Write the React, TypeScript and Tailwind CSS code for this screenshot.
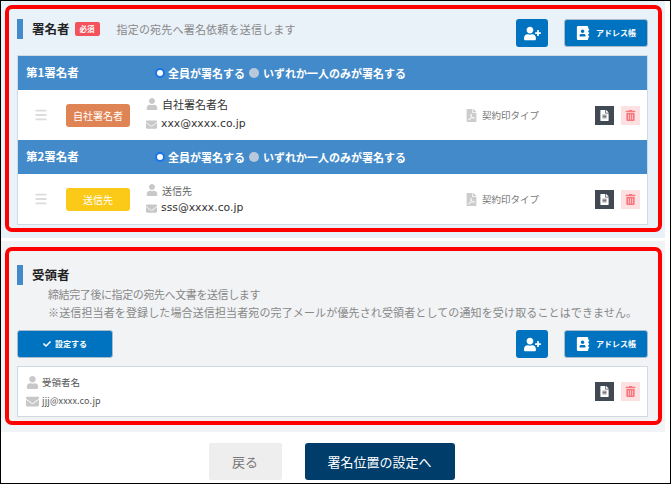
import React from 'react';
import { FaAddressBook, FaBars, FaCheck, FaEnvelope, FaFileAlt, FaFilePdf, FaTrashAlt, FaUser, FaUserPlus } from 'react-icons/fa';

const AddButtons = () => (
    <div className="flex items-center gap-4">
        <button className="w-8 h-7 rounded-[3px] bg-[#0073c0] flex items-center justify-center text-white">
            <FaUserPlus size={17} />
        </button>
        <button className="w-[84px] h-7 rounded-[3px] bg-[#0073c0] border border-[#a9bccb] flex items-center justify-center gap-1.5 text-white text-[8px] font-bold">
            <FaAddressBook size={14} />
            アドレス帳
        </button>
    </div>
);

const RowActions = () => (
    <div className="flex items-center gap-[7px]">
        <div className="w-[19px] h-[19px] bg-[#414a52] flex items-center justify-center text-white">
            <FaFileAlt size={11} />
        </div>
        <div className="w-[19px] h-[19px] bg-[#fde0e2] flex items-center justify-center text-[#f8777d]">
            <FaTrashAlt size={11} />
        </div>
    </div>
);

const SignerHeader = ({ label }: { label: string }) => (
    <div className="h-[34px] bg-[#428ac9] flex items-center pl-2 text-white text-[11px] font-bold">
        <span className="w-[129px] text-[11.5px]">{label}</span>
        <span className="shrink-0 w-[10px] h-[10px] rounded-full bg-white border-2 border-[#1a73e8] mr-[3px]" />
        <span>全員が署名する</span>
        <span className="shrink-0 w-[10px] h-[10px] rounded-full bg-[#b8c9dc] mx-1" />
        <span>いずれか一人のみが署名する</span>
    </div>
);

const SignerRow = ({ badge, badgeColor, name, nameClass, nameRowClass, mail }: { badge: string; badgeColor: string; name: string; nameClass: string; nameRowClass: string; mail: string }) => (
    <div className="h-[50px] bg-white flex items-center text-[#333]">
        <FaBars size={14} className="ml-4 text-[#dcdcdc] scale-x-90" />
        <div className={`ml-[18px] w-16 h-[23px] rounded-[3px] flex items-center justify-center text-white text-[10px] ${badgeColor}`}>
            {badge}
        </div>
        <div className="ml-4 w-[319px] flex flex-col">
            <div className={`flex items-center gap-[4px] h-[18px] ${nameRowClass}`}>
                <FaUser size={12} className="text-[#c8c8c8]" />
                <span className={nameClass}>{name}</span>
            </div>
            <div className="flex items-center gap-[4px] h-4">
                <FaEnvelope size={11} className="text-[#c8c8c8]" />
                <span className="text-[10.8px] font-['DejaVu_Sans',sans-serif]">{mail}</span>
            </div>
        </div>
        <FaFilePdf size={13} className="text-[#cccccc]" />
        <span className="ml-1 text-[9.5px] text-[#777]">契約印タイプ</span>
        <div className="ml-auto mr-[7px]">
            <RowActions />
        </div>
    </div>
);

export default function App() {
    return (
        <div className="relative w-[671px] h-[484px] bg-white border border-black overflow-hidden font-['Noto_Sans_CJK_JP','Noto_Sans',sans-serif]">
            {/* 署名者 */}
            <section className="w-[664px] h-[237px] bg-[#e9f1f9] pt-[18px] pl-4">
                <div className="w-[631px] flex items-start justify-between h-9">
                    <div className="flex items-center h-5">
                        <span className="w-[6px] h-5 bg-[#428ac9]" />
                        <span className="ml-[9px] text-[12.5px] font-bold text-[#222]">署名者</span>
                        <span className="ml-[5px] w-[25px] h-[14px] rounded-[2px] bg-[#f4525a] text-white text-[7.5px] font-bold flex items-center justify-center">必須</span>
                        <span className="ml-[17px] text-[11px] tracking-[0.2px] text-[#888]">指定の宛先へ署名依頼を送信します</span>
                    </div>
                    <AddButtons />
                </div>
                <div className="w-[631px] border border-[#cfdae4]">
                    <SignerHeader label="第1署名者" />
                    <SignerRow badge="自社署名者" badgeColor="bg-[#df8555]" name="自社署名者名" nameClass="text-[11px]" nameRowClass="-mt-[3px] mb-[3px]" mail="xxx@xxxx.co.jp" />
                    <SignerHeader label="第2署名者" />
                    <SignerRow badge="送信先" badgeColor="bg-[#fbc918]" name="送信先" nameClass="text-[10px] text-[#666]" nameRowClass="-mt-px mb-px" mail="sss@xxxx.co.jp" />
                </div>
            </section>

            {/* 受領者 */}
            <section className="mt-[3px] w-[664px] h-[191px] bg-[#f1f3f5] pt-[24px] pl-4">
                <div className="flex items-center h-5">
                    <span className="w-[6px] h-5 bg-[#428ac9]" />
                    <span className="ml-[9px] text-[12.5px] font-bold text-[#222]">受領者</span>
                </div>
                <div className="ml-[31px] text-[11px] leading-[18px] text-[#888]">
                    <p className="tracking-[-0.4px]">締結完了後に指定の宛先へ文書を送信します</p>
                    <p className="whitespace-nowrap tracking-[0.13px]">※送信担当者を登録した場合送信担当者宛の完了メールが優先され受領者としての通知を受け取ることはできません。</p>
                </div>
                <div className="w-[631px] mt-[9px] flex justify-between">
                    <button className="w-24 h-7 rounded-[3px] bg-[#0073c0] border border-[#a9bccb] flex items-center justify-center gap-1 text-white text-[8px] font-bold">
                        <FaCheck size={8} />
                        設定する
                    </button>
                    <AddButtons />
                </div>
                <div className="w-[631px] h-[51px] mt-2 bg-white border border-[#cfdae4] flex items-center pl-2 pr-2 text-[#555]">
                    <div className="flex flex-col gap-px">
                        <div className="flex items-center gap-[3px] h-[18px]">
                            <FaUser size={13} className="text-[#c8c8c8]" />
                            <span className="text-[9.5px]">受領者名</span>
                        </div>
                        <div className="flex items-center gap-[3px] h-[18px]">
                            <FaEnvelope size={13} className="text-[#c8c8c8]" />
                            <span className="text-[9px] tracking-[0.15px]">jjj@xxxx.co.jp</span>
                        </div>
                    </div>
                    <div className="ml-auto mr-[-1px]">
                        <RowActions />
                    </div>
                </div>
            </section>

            <div className="mt-[11px] flex justify-center gap-[23px] pr-[8px]">
                <button className="w-[73px] h-[37px] rounded-[2px] bg-[#eeeeee] text-[#777] text-[13px]">戻る</button>
                <button className="w-[150px] h-[37px] rounded-[3px] bg-[#003d6b] text-white text-[13px]">署名位置の設定へ</button>
            </div>

            {/* 赤枠の注釈 */}
            <div className="absolute left-[4px] top-[4px] w-[657px] h-[227px] border-4 border-[#ff0000] rounded-[7px]" />
            <div className="absolute left-[4px] top-[246px] w-[657px] h-[178px] border-4 border-[#ff0000] rounded-[7px]" />
        </div>
    );
}
